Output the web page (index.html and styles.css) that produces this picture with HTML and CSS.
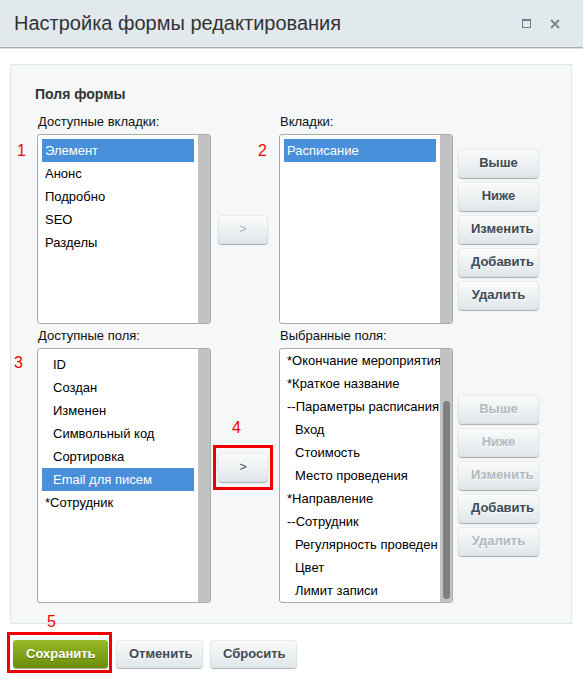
FILE: index.html
```html
<!DOCTYPE html>
<html lang="ru">
<head>
<meta charset="utf-8">
<title>Настройка формы редактирования</title>
<link rel="stylesheet" href="styles.css">
</head>
<body>
<div class="dialog">
  <div class="header">
    <div class="title">Настройка формы редактирования</div>
    <div class="header-icons">
      <svg class="icon" width="9" height="9" viewBox="0 0 9 9"><rect x="0.5" y="0.5" width="8" height="8" fill="none" stroke="#6c7f93" stroke-width="1"/><rect x="0" y="0" width="9" height="2" fill="#6c7f93"/></svg>
      <svg class="icon" width="10" height="10" viewBox="0 0 10 10"><path d="M1 1 L9 9 M9 1 L1 9" stroke="#7b8792" stroke-width="2" fill="none"/></svg>
    </div>
  </div>

  <div class="panel">
    <div class="heading">Поля формы</div>
    <div class="grid">
      <div class="label">Доступные вкладки:</div>
      <div></div>
      <div class="label">Вкладки:</div>
      <div></div>

      <div class="list">
        <div class="items">
          <div class="item selected">Элемент</div>
          <div class="item">Анонс</div>
          <div class="item">Подробно</div>
          <div class="item">SEO</div>
          <div class="item">Разделы</div>
        </div>
        <div class="scrollbar"></div>
      </div>
      <div class="mid mid-top"><div class="btn arrow disabled">&gt;</div></div>
      <div class="list">
        <div class="items">
          <div class="item selected">Расписание</div>
        </div>
        <div class="scrollbar"></div>
      </div>
      <div class="side side-top">
        <div class="btn">Выше</div>
        <div class="btn">Ниже</div>
        <div class="btn">Изменить</div>
        <div class="btn">Добавить</div>
        <div class="btn">Удалить</div>
      </div>

      <div class="label">Доступные поля:</div>
      <div></div>
      <div class="label">Выбранные поля:</div>
      <div></div>

      <div class="list">
        <div class="items">
          <div class="item indent">ID</div>
          <div class="item indent">Создан</div>
          <div class="item indent">Изменен</div>
          <div class="item indent">Символьный код</div>
          <div class="item indent">Сортировка</div>
          <div class="item indent selected">Email для писем</div>
          <div class="item">*Сотрудник</div>
        </div>
        <div class="scrollbar"></div>
      </div>
      <div class="mid mid-bottom"><div class="btn arrow">&gt;</div></div>
      <div class="list">
        <div class="items items-scrolled">
          <div class="item">*Окончание мероприятия</div>
          <div class="item">*Краткое название</div>
          <div class="item">--Параметры расписания</div>
          <div class="item indent">Вход</div>
          <div class="item indent">Стоимость</div>
          <div class="item indent">Место проведения</div>
          <div class="item">*Направление</div>
          <div class="item">--Сотрудник</div>
          <div class="item indent">Регулярность проведен</div>
          <div class="item indent">Цвет</div>
          <div class="item indent">Лимит записи</div>
        </div>
        <div class="scrollbar"><div class="thumb"></div></div>
      </div>
      <div class="side side-bottom">
        <div class="btn disabled">Выше</div>
        <div class="btn disabled">Ниже</div>
        <div class="btn disabled">Изменить</div>
        <div class="btn">Добавить</div>
        <div class="btn disabled">Удалить</div>
      </div>
    </div>
  </div>

  <div class="footer">
    <div class="btn btn-save">Сохранить</div>
    <div class="btn btn-wide">Отменить</div>
    <div class="btn btn-wide">Сбросить</div>
  </div>
</div>

<span class="mark mark-1">1</span>
<span class="mark mark-2">2</span>
<span class="mark mark-3">3</span>
<span class="mark mark-4">4</span>
<span class="mark mark-5">5</span>
<div class="hl hl-arrow"></div>
<div class="hl hl-save"></div>
</body>
</html>
```

FILE: styles.css
```css
* { box-sizing: border-box; }

html, body {
  margin: 0;
  padding: 0;
  background: #ffffff;
}

body {
  font-family: "Liberation Sans", Arial, sans-serif;
  font-size: 13px;
  color: #000;
  width: 583px;
  height: 683px;
  overflow: hidden;
}

.header {
  display: flex;
  align-items: center;
  height: 48px;
  background: #e1e9ec;
  border-bottom: 1px solid #a9adaf;
  box-shadow: 0 1px 0 #d9dddf;
}

.title {
  flex: 1;
  padding-left: 14px;
  font-size: 20px;
  line-height: 47px;
  color: #333;
}

.header-icons {
  display: flex;
  align-items: center;
  gap: 19px;
  padding-right: 23px;
}

.icon { display: block; }

.panel {
  margin: 16px 11px 0 10px;
  height: 560px;
  border: 1px solid #dce6ed;
  background: #f5f7f8;
  padding: 21px 0 20px 26px;
}

.heading {
  margin-left: -2px;
  font-size: 14px;
  font-weight: bold;
  line-height: 16px;
  color: #333;
  margin-bottom: 12px;
}

.grid {
  display: grid;
  grid-template-columns: 174px 68px 174px 86px;
  grid-template-rows: 16px 190px 16px 255px;
  row-gap: 4px;
}

.label {
  line-height: 16px;
  padding-left: 1px;
  color: #111;
  white-space: nowrap;
}

.list {
  display: flex;
  border: 1px solid #a7abad;
  border-radius: 3px;
  background: #fff;
  overflow: hidden;
}

.items {
  flex: 1;
  min-width: 0;
  padding: 4px 4px;
  overflow: hidden;
}

.items-scrolled { padding-top: 0; padding-right: 0; }

.item {
  height: 23px;
  line-height: 23px;
  padding-left: 3px;
  white-space: nowrap;
}

.item.indent { padding-left: 11px; }

.item.selected {
  background: #4a8fd9;
  color: #fff;
}

.scrollbar {
  width: 12px;
  flex: 0 0 12px;
  background: #c2c2c2;
  padding-top: 52px;
}

.thumb {
  width: 7px;
  height: 198px;
  margin-left: 3px;
  border-radius: 4px;
  background: #7f7f7f;
}

.mid { padding-left: 7px; }
.mid-top { display: flex; align-items: center; }
.mid-bottom { padding-top: 105px; }

.btn {
  height: 29px;
  line-height: 28px;
  padding: 0 13px;
  text-align: center;
  white-space: nowrap;
  font-weight: bold;
  font-size: 13px;
  color: #3f4a53;
  background: linear-gradient(to bottom, #fbfcfc, #dfe6e9);
  border-radius: 4px;
  box-shadow: 0 1px 1px rgba(0, 0, 0, 0.3), inset 0 0 0 1px rgba(200, 210, 214, 0.35);
  text-shadow: 0 1px rgba(255, 255, 255, 0.7);
}

.btn.disabled { color: #b3b9bd; }

.arrow {
  width: 50px;
  padding: 0;
  font-weight: normal;
  color: #4b535b;
}

.arrow.disabled { color: #aab1b5; }

.side {
  display: flex;
  flex-direction: column;
  gap: 4px;
  padding-left: 5px;
}

.side .btn { width: 81px; }

.side-top { padding-top: 15px; }
.side-bottom { padding-top: 47px; }

.footer {
  display: flex;
  gap: 8px;
  margin-top: 16px;
  padding-left: 13px;
}

.footer .btn { height: 28px; line-height: 28px; }

.btn-save {
  width: 95px;
  color: #fff;
  background: linear-gradient(to bottom, #98b826, #6b8d0c);
  box-shadow: 0 1px 1px rgba(0, 0, 0, 0.35);
  text-shadow: 0 1px rgba(0, 0, 0, 0.3);
  border-radius: 3px;
}

.btn-wide { width: 87px; }
.btn-wide + .btn-wide { margin-left: -1px; }

.mark {
  position: absolute;
  font-size: 16px;
  line-height: 16px;
  color: #f20000;
}

.mark-1 { left: 17px; top: 143px; }
.mark-2 { left: 258px; top: 143px; }
.mark-3 { left: 14px; top: 355px; }
.mark-4 { left: 232px; top: 420px; }
.mark-5 { left: 47px; top: 614px; }

.hl {
  position: absolute;
  border: 3px solid #f20000;
}

.hl-arrow { left: 213px; top: 445px; width: 60px; height: 45px; }
.hl-save { left: 7px; top: 632px; width: 105px; height: 41px; }
```
